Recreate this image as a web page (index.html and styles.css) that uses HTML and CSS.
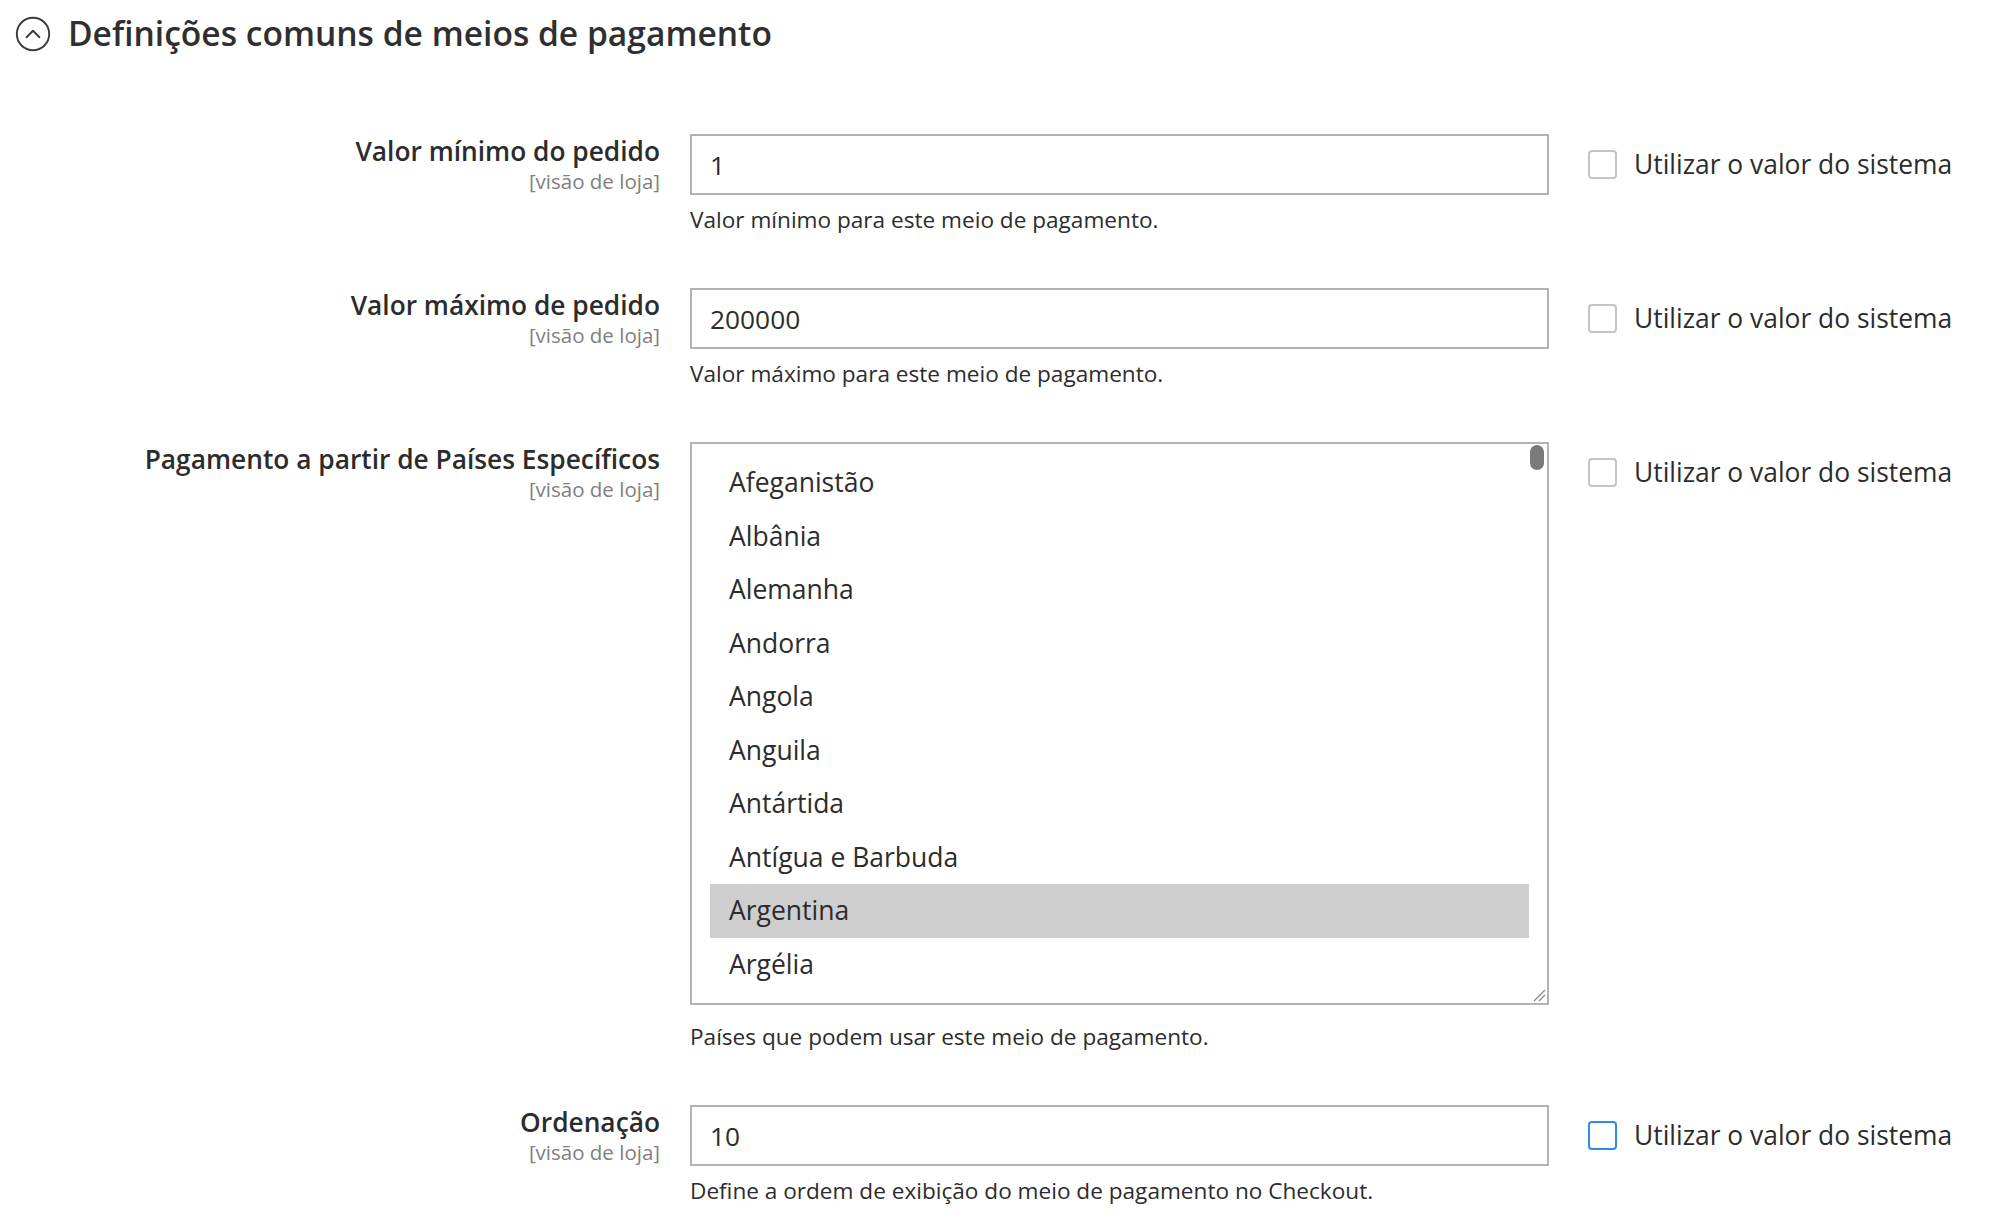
FILE: index.html
```html
<!DOCTYPE html>
<html lang="pt-BR">
<head>
<meta charset="utf-8">
<title>Definições comuns de meios de pagamento</title>
<link rel="stylesheet" href="styles.css">
</head>
<body>
<section class="section">
  <header class="section-head">
    <svg class="collapse-icon" width="36" height="36" viewBox="0 0 36 36" aria-hidden="true">
      <circle cx="18" cy="18" r="16.2" fill="none" stroke="#3a3a3a" stroke-width="1.9"/>
      <polyline points="11.5,21.2 18,14.8 24.5,21.2" fill="none" stroke="#3a3a3a" stroke-width="1.9" stroke-linecap="round" stroke-linejoin="round"/>
    </svg>
    <h2 class="section-title">Definições comuns de meios de pagamento</h2>
  </header>

  <div class="row">
    <div class="label-col">
      <div class="label">Valor mínimo do pedido</div>
      <div class="scope">[visão de loja]</div>
    </div>
    <div class="control-col">
      <input class="text-input" type="text" value="1">
      <div class="note">Valor mínimo para este meio de pagamento.</div>
    </div>
    <div class="inherit-col">
      <span class="checkbox"></span>
      <span class="inherit-label">Utilizar o valor do sistema</span>
    </div>
  </div>

  <div class="row">
    <div class="label-col">
      <div class="label">Valor máximo de pedido</div>
      <div class="scope">[visão de loja]</div>
    </div>
    <div class="control-col">
      <input class="text-input" type="text" value="200000">
      <div class="note">Valor máximo para este meio de pagamento.</div>
    </div>
    <div class="inherit-col">
      <span class="checkbox"></span>
      <span class="inherit-label">Utilizar o valor do sistema</span>
    </div>
  </div>

  <div class="row">
    <div class="label-col">
      <div class="label">Pagamento a partir de Países Específicos</div>
      <div class="scope">[visão de loja]</div>
    </div>
    <div class="control-col">
      <div class="listbox" role="listbox" aria-multiselectable="true">
        <ul class="options">
          <li class="option">Afeganistão</li>
          <li class="option">Albânia</li>
          <li class="option">Alemanha</li>
          <li class="option">Andorra</li>
          <li class="option">Angola</li>
          <li class="option">Anguila</li>
          <li class="option">Antártida</li>
          <li class="option">Antígua e Barbuda</li>
          <li class="option selected">Argentina</li>
          <li class="option">Argélia</li>
        </ul>
        <span class="scroll-thumb"></span>
        <svg class="grip" width="14" height="14" viewBox="0 0 14 14" aria-hidden="true">
          <line x1="13" y1="2" x2="2" y2="13" stroke="#8a8a8a" stroke-width="1.3"/>
          <line x1="13" y1="7" x2="7" y2="13" stroke="#8a8a8a" stroke-width="1.3"/>
        </svg>
      </div>
      <div class="note note-list">Países que podem usar este meio de pagamento.</div>
    </div>
    <div class="inherit-col">
      <span class="checkbox"></span>
      <span class="inherit-label">Utilizar o valor do sistema</span>
    </div>
  </div>

  <div class="row">
    <div class="label-col">
      <div class="label">Ordenação</div>
      <div class="scope">[visão de loja]</div>
    </div>
    <div class="control-col">
      <input class="text-input" type="text" value="10">
      <div class="note">Define a ordem de exibição do meio de pagamento no Checkout.</div>
    </div>
    <div class="inherit-col">
      <span class="checkbox checkbox-focus"></span>
      <span class="inherit-label">Utilizar o valor do sistema</span>
    </div>
  </div>
</section>
</body>
</html>
```

FILE: styles.css
```css
* { box-sizing: border-box; }

html, body {
  margin: 0;
  padding: 0;
  background: #ffffff;
}

body {
  font-family: "Open Sans", "Noto Sans", sans-serif;
  color: #303030;
  line-height: 1.36;
}

.section {
  padding: 11px 0 0 0;
}

.section-head {
  display: flex;
  align-items: center;
  height: 45px;
  padding-left: 15px;
  gap: 17px;
  margin-bottom: 78px;
}

.collapse-icon {
  display: block;
  flex: none;
}

.section-title {
  margin: 0;
  font-size: 33.6px;
  font-weight: 600;
  line-height: 45px;
  color: #2f2f2f;
}

.row {
  display: grid;
  grid-template-columns: 660px 859px 1fr;
  column-gap: 30px;
  margin-bottom: 53px;
}

.label-col {
  text-align: right;
}

.label {
  font-size: 26.3px;
  font-weight: 600;
  line-height: 35px;
  color: #2c2c2c;
}

.scope {
  font-size: 20.5px;
  line-height: 24px;
  color: #808080;
}

.text-input {
  display: block;
  width: 859px;
  height: 61px;
  margin: 0;
  padding: 0 18px;
  border: 2px solid #b3b3b3;
  border-radius: 0;
  background: #ffffff;
  font-family: "Open Sans", "Noto Sans", sans-serif;
  font-size: 26.3px;
  color: #2c2c2c;
  outline: none;
}

.note {
  margin-top: 10px;
  font-size: 22.6px;
  line-height: 30px;
  color: #2c2c2c;
}

.note-list {
  margin-top: 17px;
}

.listbox {
  position: relative;
  width: 859px;
  height: 563px;
  border: 2px solid #b3b3b3;
  padding: 12px 18px 0 18px;
  background: #ffffff;
}

.options {
  list-style: none;
  margin: 0;
  padding: 0;
}

.option {
  height: 53.5px;
  line-height: 53.5px;
  padding-left: 19px;
  font-size: 26.5px;
  color: #2c2c2c;
  white-space: nowrap;
}

.option.selected {
  background: #cecece;
}

.scroll-thumb {
  position: absolute;
  top: 1px;
  right: 3px;
  width: 14px;
  height: 25px;
  border-radius: 7px;
  background: #7a7a7a;
}

.grip {
  position: absolute;
  right: 1px;
  bottom: 1px;
}

.inherit-col {
  display: flex;
  align-items: center;
  height: 61px;
  padding-left: 9px;
  gap: 17px;
}

.checkbox {
  display: block;
  flex: none;
  width: 29px;
  height: 29px;
  border: 2px solid #c4c4c4;
  border-radius: 4px;
  background: #ffffff;
}

.checkbox-focus {
  border-color: #2e8ce8;
}

.inherit-label {
  font-size: 26.4px;
  line-height: 35px;
  color: #2c2c2c;
  white-space: nowrap;
}
```
